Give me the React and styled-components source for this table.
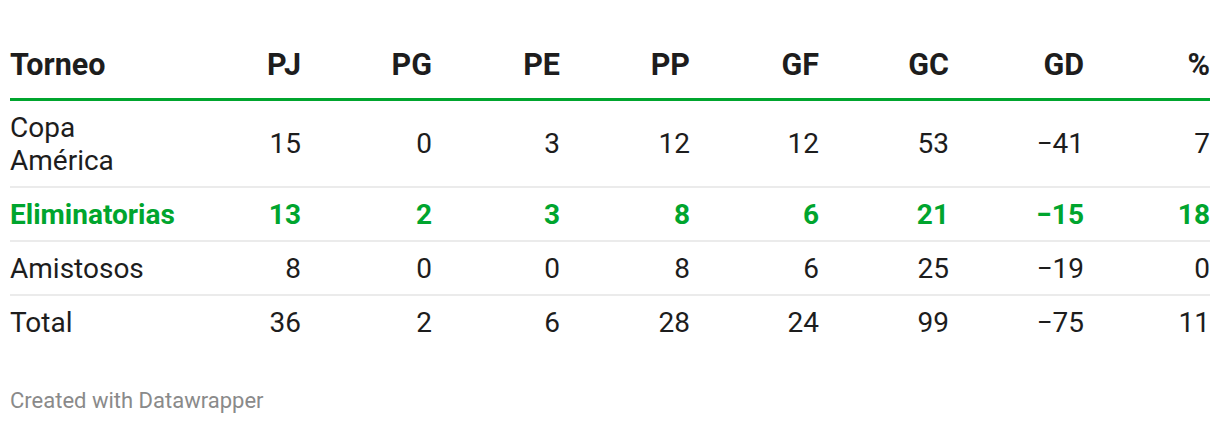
import React from 'react';
import styled, { createGlobalStyle } from 'styled-components';

const GlobalStyle = createGlobalStyle`
  html, body {
    margin: 0;
    padding: 0;
    background: #ffffff;
  }
  body {
    font-family: Roboto, "Liberation Sans", Arial, sans-serif;
    color: #1d1d1d;
  }
`;

const Page = styled.div`
  padding: 48px 10px 0;
  width: 1200px;
`;

const Grid = styled.div`
  display: grid;
  grid-template-columns: 170px 121px 131px 128px 130px 129px 130px 135px 126px;
  font-size: 28px;
  line-height: 33px;
`;

const HeadCell = styled.div`
  font-size: 30.5px;
  font-weight: 700;
  text-align: ${(p) => (p.$left ? 'left' : 'right')};
  padding-bottom: 17px;
  border-bottom: 3px solid #00a52e;
`;

const Cell = styled.div`
  display: flex;
  align-items: center;
  justify-content: ${(p) => (p.$left ? 'flex-start' : 'flex-end')};
  text-align: ${(p) => (p.$left ? 'left' : 'right')};
  padding: 9.5px 0;
  border-bottom: ${(p) => (p.$last ? 'none' : '2px solid #ebebeb')};
  color: ${(p) => (p.$highlight ? '#00a52e' : '#1d1d1d')};
  font-weight: ${(p) => (p.$highlight ? 700 : 400)};
`;

const Footer = styled.div`
  margin-top: 40px;
  font-size: 22px;
  line-height: 26px;
  color: #8a8a8a;
`;

const headers = ['Torneo', 'PJ', 'PG', 'PE', 'PP', 'GF', 'GC', 'GD', '%'];

const rows = [
  { name: 'Copa América', values: [15, 0, 3, 12, 12, 53, '−41', 7] },
  { name: 'Eliminatorias', values: [13, 2, 3, 8, 6, 21, '−15', 18], highlight: true },
  { name: 'Amistosos', values: [8, 0, 0, 8, 6, 25, '−19', 0] },
  { name: 'Total', values: [36, 2, 6, 28, 24, 99, '−75', 11] },
];

export default function App() {
  return (
    <>
      <GlobalStyle />
      <Page>
        <Grid>
          {headers.map((h, i) => (
            <HeadCell key={h} $left={i === 0}>
              {h}
            </HeadCell>
          ))}
          {rows.map((row, r) => {
            const last = r === rows.length - 1;
            return (
              <React.Fragment key={row.name}>
                <Cell $left $last={last} $highlight={row.highlight}>
                  {row.name}
                </Cell>
                {row.values.map((v, i) => (
                  <Cell key={i} $last={last} $highlight={row.highlight}>
                    {v}
                  </Cell>
                ))}
              </React.Fragment>
            );
          })}
        </Grid>
        <Footer>Created with Datawrapper</Footer>
      </Page>
    </>
  );
}
